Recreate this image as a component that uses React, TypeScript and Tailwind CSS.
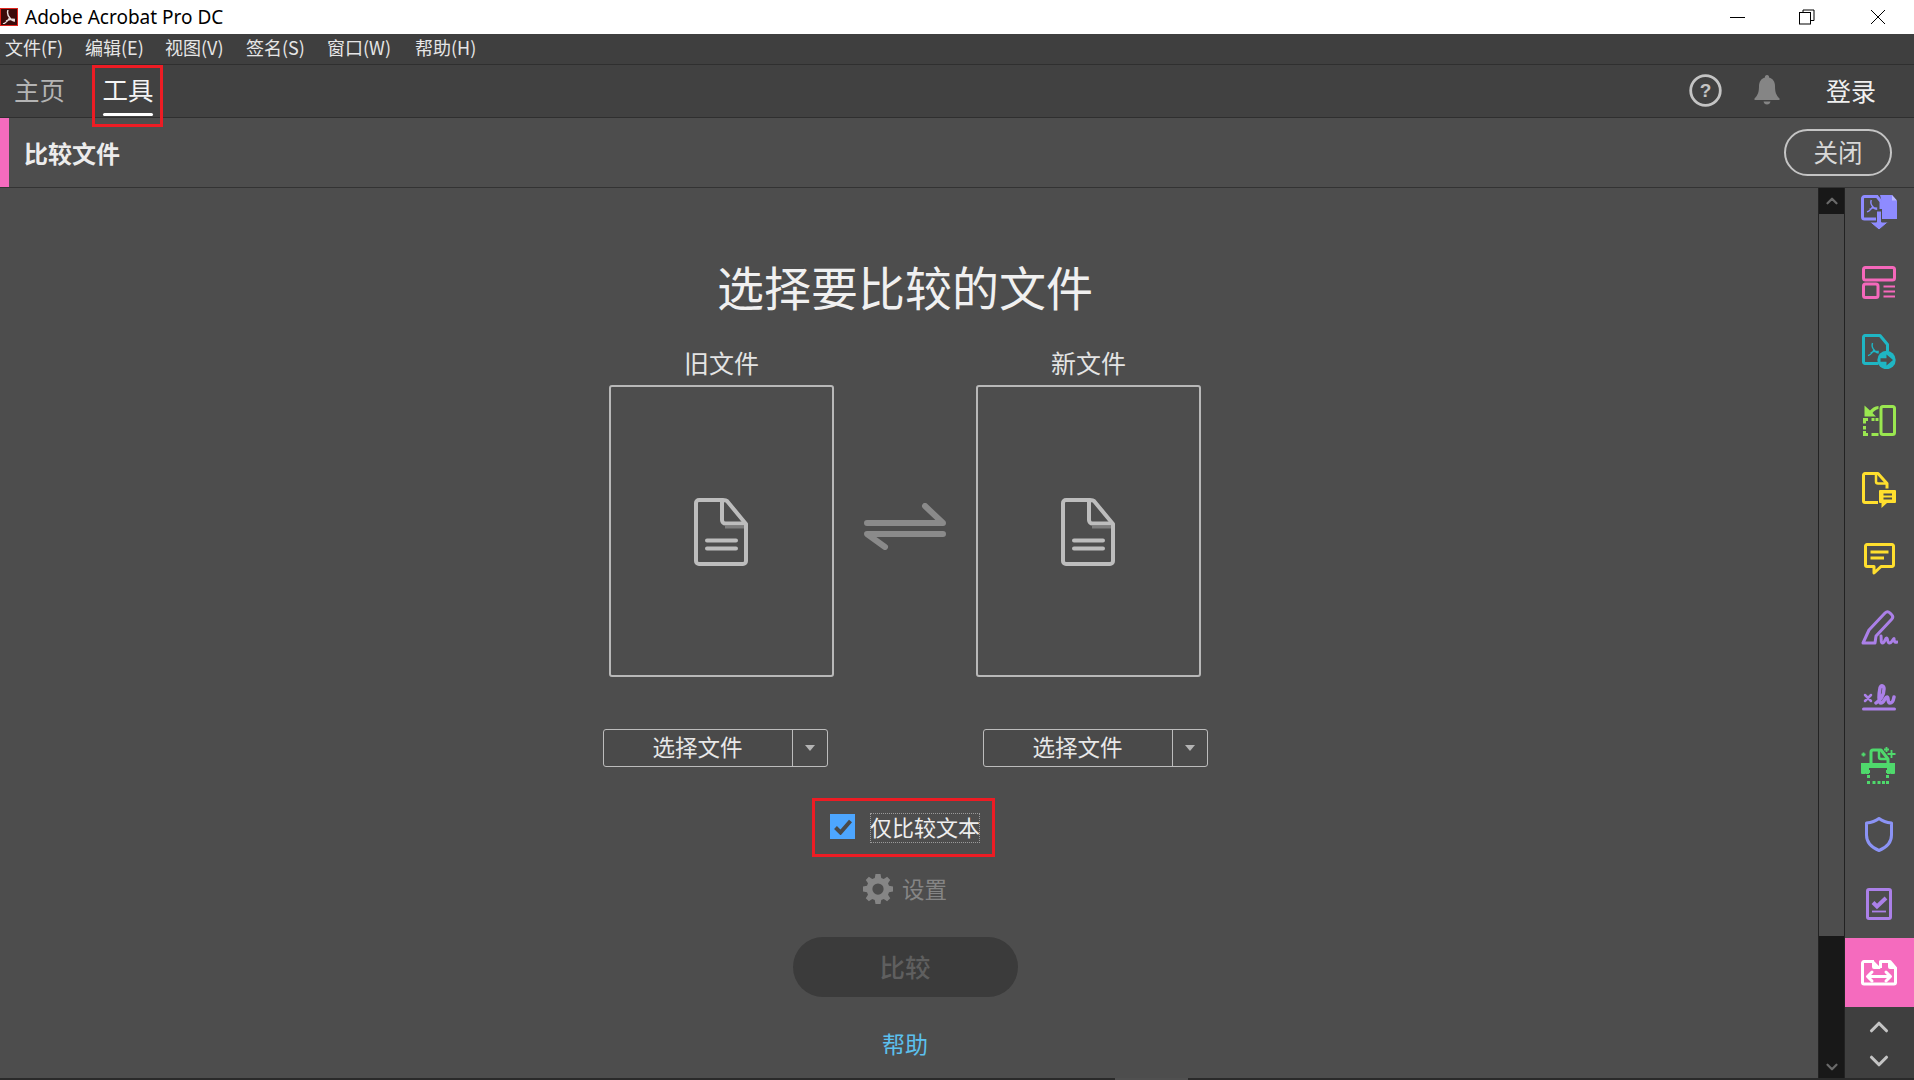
import { ReactNode } from "react";
import { ChevronDown, ChevronUp } from "lucide-react";

const menus = [
  { label: "文件(F)", width: "w-[80px]" },
  { label: "编辑(E)", width: "w-[80px]" },
  { label: "视图(V)", width: "w-[81px]" },
  { label: "签名(S)", width: "w-[81px]" },
  { label: "窗口(W)", width: "w-[88px]" },
  { label: "帮助(H)", width: "w-[80px]" },
];

function PdfMark({ x, y, s, color }: { x: number; y: number; s: number; color: string }) {
  return (
    <path
      transform={`translate(${x} ${y}) scale(${s})`}
      d="M5 0 C4 3 5 6 7 8 C8 10 10 11 12 11 M7 7 C5 11 3 13 0 14 M3 11 C6 9 9 9 12 9.500"
      fill="none"
      stroke={color}
      strokeWidth={1.4 / s}
    />
  );
}

function DocIcon() {
  return (
    <svg width="54" height="68" viewBox="0 0 54 68" fill="none" stroke="#bdbdbd" strokeWidth="4" strokeLinejoin="round">
      <path d="M29 2H5a3 3 0 0 0-3 3v58a3 3 0 0 0 3 3h44a3 3 0 0 0 3-3V26L33 3Q32 2 29 2Z" />
      <path d="M28 2v20a3.500 3.500 0 0 0 3.500 3.500H52" />
      <path d="M31 29H50" stroke="#7d7d7d" strokeWidth="3" />
      <path d="M13 42.500H42M13 50.500H42" strokeLinecap="round" />
    </svg>
  );
}

function SwapArrows() {
  return (
    <svg width="82" height="47" viewBox="0 0 82 47" fill="none" stroke="#8a8a8a" strokeWidth="6" strokeLinecap="round" strokeLinejoin="round">
      <path d="M3 20H79L61 3" />
      <path d="M79 31H3L21 44" />
    </svg>
  );
}

const railIcons: ReactNode[] = [
  <svg key="1" width="36" height="35" viewBox="0 0 36 35" fill="none">
    <path d="M17 1.500H3.500a2 2 0 0 0-2 2V22a2 2 0 0 0 2 2H15" stroke="#8e8bff" strokeWidth="3" />
    <path d="M16 1.500l4 5V14" stroke="#8e8bff" strokeWidth="3" />
    <path d="M19 0h12l5 6v18H21V8Z" fill="#8e8bff" />
    <path d="M31 0v5.500h5Z" fill="#b9b7ff" />
    <path d="M15.500 16h5v11h7L18 35 8.500 27h7Z" fill="#8e8bff" stroke="#4d4d4d" strokeWidth="1" />
    <PdfMark x={6} y={5} s={0.85} color="#8e8bff" />
  </svg>,
  <svg key="2" width="34" height="33" viewBox="0 0 34 33" fill="none" stroke="#f568bb" strokeWidth="3">
    <rect x="1.500" y="1.500" width="31" height="12.500" rx="2" />
    <rect x="1.500" y="18" width="14.500" height="13.500" rx="2" />
    <path d="M21.500 20.500H33M21.500 25.500H33M21.500 30.500H33" strokeWidth="1.800" />
  </svg>,
  <svg key="3" width="34" height="35" viewBox="0 0 34 35" fill="none">
    <path d="M16 29.500H3a1.500 1.500 0 0 1-1.500-1.500V3A1.500 1.500 0 0 1 3 1.500h15l7.500 9v7" stroke="#1fb6c4" strokeWidth="3" strokeLinejoin="round" />
    <PdfMark x={6} y={9} s={0.9} color="#1fb6c4" />
    <circle cx="24.500" cy="26" r="9.200" fill="#1fb6c4" />
    <path d="M18.500 24.200h6v-3.700L31 26l-6.500 5.500v-3.700h-6Z" fill="#4d4d4d" />
  </svg>,
  <svg key="4" width="33" height="31" viewBox="0 0 33 31" fill="none" stroke="#9ae750" strokeWidth="3">
    <rect x="18" y="1.500" width="13.500" height="28" rx="2" />
    <path d="M1.500 18.500V14.500H5M8.500 14.500H11.500M12.500 14.500H15.500M1.500 21V24.500M1.500 26V29.500H5M8.500 29.500H15.500" />
    <path d="M1.500 0.500V11.500H13L9.500 8C11 6 13 4.500 15.500 4V1C11.500 1.500 9 3.300 7 5.500Z" fill="#9ae750" stroke="none" />
  </svg>,
  <svg key="5" width="34" height="36" viewBox="0 0 34 36" fill="none">
    <path d="M16 30.500H3a1.500 1.500 0 0 1-1.500-1.500V3A1.500 1.500 0 0 1 3 1.500h13l9 10v5" stroke="#ffdf2e" strokeWidth="3" strokeLinejoin="round" />
    <path d="M14 1.500v8a2 2 0 0 0 2 2h9" stroke="#ffdf2e" strokeWidth="2.500" />
    <path d="M18 18h15a1 1 0 0 1 1 1v11a1 1 0 0 1-1 1H25l-5.500 5V31H18a1 1 0 0 1-1-1V19a1 1 0 0 1 1-1Z" fill="#ffdf2e" />
    <path d="M21.500 22.500H30M21.500 26.500H30" stroke="#4d4d4d" strokeWidth="1.800" />
  </svg>,
  <svg key="6" width="31" height="32" viewBox="0 0 31 32" fill="none" stroke="#ffdf2e" strokeWidth="3" strokeLinejoin="round">
    <path d="M3 1.500H28a1.500 1.500 0 0 1 1.500 1.500v19a1.500 1.500 0 0 1-1.500 1.500H17L10 30v-6.500H3A1.500 1.500 0 0 1 1.500 22V3A1.500 1.500 0 0 1 3 1.500Z" />
    <path d="M6.500 9H24.500M6.500 15H20" />
  </svg>,
  <svg key="7" width="37" height="35" viewBox="0 0 37 35" fill="none" stroke="#ab80e8" strokeWidth="3" strokeLinecap="round" strokeLinejoin="round">
    <path d="M2 33 8 20 24 3c1.500-1.500 3.500-1.500 5 0l1.500 1.500c1.500 1.500 1.500 3.500 0 5L15 26l-1 7Z" />
    <path d="M20 26c.5 3-.5 7 1.500 7 2.500 0 2.500-5 4-5s.5 5 3 5c2 0 3-3 4.500-4.500 0 2 .5 4.500 3 3.500" />
  </svg>,
  <svg key="8" width="34" height="28" viewBox="0 0 34 28" fill="none" stroke="#ab80e8" strokeWidth="3" strokeLinecap="round" strokeLinejoin="round">
    <path d="M3 12 9 18M9 12 3 18" strokeWidth="2.500" />
    <path d="M14 20c4-2 8-8 8-14 0-3-3-5-4-1-1 5-2 15 1 15 3 0 4-6 6-6s0 6 3 6 3.500-3 4-6" strokeWidth="3.500" />
    <path d="M1.500 26H32.500" />
  </svg>,
  <svg key="9" width="50" height="50" viewBox="0 0 50 50" fill="none" stroke="#4fd96c" strokeWidth="3" strokeLinejoin="round">
    <path d="M17 23V11a2 2 0 0 1 2-2h8l7 9v5" />
    <path d="M25 9v7a2 2 0 0 0 2 2h7" strokeWidth="2.500" />
    <path d="M7 22h34v5H36v6H12v-6H7Z" fill="#4fd96c" stroke="none" />
    <rect x="7" y="22" width="5" height="11" rx="1" fill="#4fd96c" stroke="none" />
    <rect x="36" y="22" width="5" height="11" rx="1" fill="#4fd96c" stroke="none" />
    <rect x="15" y="27" width="18" height="6" fill="#4d4d4d" stroke="none" />
    <rect x="13" y="29" width="3" height="3" fill="#4fd96c" stroke="none" />
    <rect x="32" y="29" width="3" height="3" fill="#4fd96c" stroke="none" />
    <rect x="13" y="34" width="3" height="3" fill="#4fd96c" stroke="none" />
    <rect x="32" y="34" width="3" height="3" fill="#4fd96c" stroke="none" />
    <rect x="13" y="40" width="3" height="3" fill="#4fd96c" stroke="none" />
    <rect x="18.500" y="40" width="3" height="3" fill="#4fd96c" stroke="none" />
    <rect x="23.500" y="40" width="3" height="3" fill="#4fd96c" stroke="none" />
    <rect x="28" y="40" width="3" height="3" fill="#4fd96c" stroke="none" />
    <rect x="32" y="40" width="3" height="3" fill="#4fd96c" stroke="none" />
    <path d="M37.500 9V17M33.500 13H41.500M32.500 6V11M30 8.500H35M9.500 11.500V15.500M7.500 13.500H11.500" strokeWidth="1.800" />
  </svg>,
  <svg key="10" width="28" height="35" viewBox="0 0 28 35" fill="none" stroke="#8b93f5" strokeWidth="3" strokeLinejoin="round">
    <path d="M14 1.500C10 4.500 6 5.500 1.500 6v12c0 7.500 5 12.500 12.500 15.500C21.500 30.500 26.500 25.500 26.500 18V6C22 5.500 18 4.500 14 1.500Z" />
  </svg>,
  <svg key="11" width="26" height="32" viewBox="0 0 26 32" fill="none" stroke="#ab80e8" strokeWidth="3">
    <rect x="1.500" y="1.500" width="23" height="29" rx="1.500" />
    <path d="M7 14.500 11 18.500 20 10" strokeWidth="4" />
    <path d="M6 23.500H20" strokeWidth="1.800" />
  </svg>,
];

function CompareIcon() {
  return (
    <svg width="36" height="26" viewBox="0 0 36 26" fill="none" stroke="#ffffff" strokeWidth="3" strokeLinejoin="round">
      <path d="M13 1.500H3A1.500 1.500 0 0 0 1.500 3v19.500A1.500 1.500 0 0 0 3 24h30a1.500 1.500 0 0 0 1.500-1.500V8L29 1.500H19.500V8" />
      <path d="M12 1.500 18.500 8H13a1 1 0 0 1-1-1Z" fill="#ffffff" strokeWidth="2" />
      <path d="M28 1.500 34.500 8H29a1 1 0 0 1-1-1Z" fill="#ffffff" strokeWidth="2" />
      <path d="M8 16.500H28" />
      <path d="M11 12 6.500 16.500 11 21M25 12 29.500 16.500 25 21" strokeLinecap="round" />
    </svg>
  );
}

function FilePicker({ title }: { title: string }) {
  return (
    <div className="flex flex-col items-center">
      <div className="text-[25px] leading-[28px] h-[30px] mb-[7px] text-[#e4e4e4]">{title}</div>
      <div className="w-[225px] h-[292px] flex items-center justify-center border-2 border-[#b8b8b8] rounded-[3px] pt-[2px] pr-[2px]">
        <DocIcon />
      </div>
    </div>
  );
}

function PickerButton() {
  return (
    <div className="w-[225px] h-[38px] flex rounded-[3px] border border-[#bcbcbc] bg-[#4a4a4a]">
      <div className="w-[189px] flex items-center justify-center pb-[2px] text-[22.500px] text-[#e8e8e8] border-r border-[#bcbcbc]">选择文件</div>
      <div className="flex-1 flex items-center justify-center pb-px">
        <div className="w-0 h-0 border-l-[5px] border-r-[5px] border-t-[6px] border-l-transparent border-r-transparent border-t-[#b4b4b4]" />
      </div>
    </div>
  );
}

function Gear() {
  return (
    <svg width="30" height="30" viewBox="0 0 24 24" fill="#858585">
      <path
        fillRule="evenodd"
        d="M10 0h4l.6 3.200 2 .8L19.300 2.200l2.500 2.500L20 7.400l.8 2L24 10v4l-3.200.6-.8 2 1.800 2.700-2.500 2.500L16.600 20l-2 .8L14 24h-4l-.6-3.200-2-.8-2.700 1.800-2.500-2.500L4 16.600l-.8-2L0 14v-4l3.200-.6.8-2L2.200 4.700l2.500-2.500L7.400 4l2-.8ZM12 7.500a4.500 4.500 0 1 0 0 9 4.500 4.500 0 0 0 0-9Z"
      />
    </svg>
  );
}

export default function App() {
  return (
    <div className="w-[1914px] h-[1080px] overflow-hidden flex flex-col bg-[#4d4d4d] font-['Noto_Sans_CJK_SC',sans-serif]">
      {/* title bar */}
      <div className="h-[34px] bg-white flex items-center shrink-0">
        <div className="w-[18px] h-[18px] bg-[#3b0a0a] border border-[#e0231c] flex items-center justify-center shrink-0">
          <svg width="14" height="14" viewBox="0 0 14 14">
            <PdfMark x={1} y={0} s={1} color="#e8dcdc" />
          </svg>
        </div>
        <span className="ml-[7px] text-[19px] text-black font-['Noto_Sans',sans-serif]">Adobe Acrobat Pro DC</span>
        <div className="ml-auto flex items-center">
          <div className="w-[15px] h-px bg-black mr-[54px]" />
          <svg width="16" height="16" viewBox="0 0 16 16" fill="none" stroke="#000" className="mr-[55px]">
            <rect x="0.500" y="3.500" width="11" height="11.500" />
            <path d="M4 3.500V1H15V11.500H11.500" />
          </svg>
          <svg width="16" height="16" viewBox="0 0 16 16" fill="none" stroke="#000" className="mr-[28px]">
            <path d="M1 1 15 15M15 1 1 15" />
          </svg>
        </div>
      </div>

      {/* menu */}
      <div className="h-[31px] bg-[#3f3f3f] border-b border-[#2f2f2f] flex items-center shrink-0 text-[18px] text-[#e6e6e6] pl-[5px] pb-[3px]">
        {menus.map((m) => (
          <span key={m.label} className={m.width}>{m.label}</span>
        ))}
      </div>

      {/* tabs */}
      <div className="h-[53px] bg-[#414141] border-b border-[#2f2f2f] flex shrink-0 relative">
        <span className="ml-[14px] mt-[6px] text-[25.500px] leading-[36px] text-[#b4b4b4]">主页</span>
        <div className="ml-[38px] w-[50px] h-full flex flex-col items-center relative">
          <span className="mt-[6px] text-[25.500px] leading-[36px] text-[#f4f4f4] whitespace-nowrap">工具</span>
          <div className="absolute left-0 bottom-[1px] w-[50px] h-[3px] rounded-full bg-white" />
          <div className="absolute left-[-11px] top-0 w-[71px] h-[62px] border-[3px] border-[#ed1c24] z-10" />
        </div>
        <div className="ml-auto flex items-center pr-[38px] pb-[2px]">
          <svg width="33" height="33" viewBox="0 0 33 33" className="mr-[32px]">
            <circle cx="16.500" cy="16.500" r="14.800" fill="none" stroke="#c4c4c4" strokeWidth="2.800" />
            <text x="16.500" y="23" textAnchor="middle" fontSize="19" fontWeight="700" fill="#c4c4c4" fontFamily="Liberation Sans">?</text>
          </svg>
          <svg width="26" height="30" viewBox="0 0 26 30" fill="#858585" className="mr-[46px]">
            <path d="M13 0a2 2 0 0 1 2 2.500c4 1 6 4.500 6 8.500 0 6 1 9 4.500 12.500V25H.5v-1.500C4 20 5 17 5 11c0-4 2-7.500 6-8.500A2 2 0 0 1 13 0Z" />
            <path d="M9.500 26.500h7C16 28.500 15 29.500 13 29.500s-3-1-3.500-3Z" />
          </svg>
          <span className="text-[25px] leading-[36px] text-[#f0f0f0]">登录</span>
        </div>
      </div>

      {/* tool header */}
      <div className="h-[70px] bg-[#4d4d4d] border-b border-[#333333] flex items-center shrink-0">
        <div className="w-[9px] h-full bg-[#f56bbe]" />
        <span className="ml-[15px] text-[24px] font-bold text-[#ececec]">比较文件</span>
        <div className="ml-auto mr-[22px] w-[108px] h-[47px] rounded-full border-2 border-[#c4c4c4] flex items-center justify-center text-[24.500px] text-[#d8d8d8]">关闭</div>
      </div>

      <div className="flex-1 flex min-h-0">
        {/* main */}
        <div className="w-[1818px] shrink-0">
          <div className="w-[1810px] flex flex-col items-center">
            <h1 className="mt-[64px] h-[68px] text-[47px] leading-[68px] text-[#f0f0f0]">选择要比较的文件</h1>
            <div className="mt-[28px] flex items-start">
              <FilePicker title="旧文件" />
              <div className="w-[142px] flex justify-center pt-[155px]">
                <SwapArrows />
              </div>
              <FilePicker title="新文件" />
            </div>
            <div className="mt-[52px] flex gap-[155px]">
              <PickerButton />
              <PickerButton />
            </div>
            <div className="mt-[31px] mr-[3px] w-[183px] h-[59px] border-[3px] border-[#ed1c24] flex items-center pl-[15px]">
              <div className="w-[25px] h-[25px] -mt-[2px] bg-[#4da6ff] flex items-center justify-center shrink-0">
                <svg width="18" height="16" viewBox="0 0 18 16" fill="none" stroke="#4a4a4a" strokeWidth="4">
                  <path d="M1.500 8.500 6.500 13.500 16.500 2" />
                </svg>
              </div>
              <div className="ml-[15px] w-[110px] h-[30px] border border-dotted border-[#9a9a9a] flex items-center justify-center pb-[2px] text-[22px] text-[#eeeeee] whitespace-nowrap">仅比较文本</div>
            </div>
            <div className="mt-[17px] flex items-center gap-[9px]">
              <Gear />
              <span className="text-[22.500px] leading-[28px] h-[30px] text-[#858585]">设置</span>
            </div>
            <div className="mt-[33px] w-[225px] h-[60px] rounded-full bg-[#3b3b3b] flex items-center justify-center pb-[2px] text-[25.500px] font-medium text-[#5f5f5f]">比较</div>
            <div className="mt-[29px] text-[23px] leading-[34px] text-[#5cc0ee]">帮助</div>
          </div>
        </div>

        {/* scroll track */}
        <div className="w-[27px] shrink-0 flex flex-col border-x border-[#222222]">
          <div className="h-[26px] bg-[#181818] flex items-center justify-center">
            <ChevronUp size={18} strokeWidth={3} color="#6a6a6a" />
          </div>
          <div className="h-[722px] bg-[#4d4d4d]" />
          <div className="flex-1 bg-[#181818] flex items-end justify-center pb-[2px]">
            <ChevronDown size={18} strokeWidth={3} color="#6a6a6a" />
          </div>
        </div>

        {/* right rail */}
        <div className="flex-1 flex flex-col min-w-0">
          {railIcons.map((icon, i) => (
            <div key={i} className={i === 0 ? "h-[60px] flex justify-center pt-[7px] pr-px" : "h-[69px] flex items-center justify-center pr-px"}>
              {icon}
            </div>
          ))}
          <div className="h-[69px] bg-[#f56bbe] flex items-center justify-center pr-px">
            <CompareIcon />
          </div>
          <div className="flex-1 bg-[#3f3f3f] flex flex-col items-center pt-[5px] gap-[4px] pr-px">
            <ChevronUp size={30} strokeWidth={2.500} color="#c4c4c4" />
            <ChevronDown size={30} strokeWidth={2.500} color="#c4c4c4" />
          </div>
        </div>
      </div>
      <div className="h-[2px] bg-[#2a2a2a] shrink-0 flex">
        <div className="ml-[1115px] w-[73px] bg-[#505050]" />
      </div>
    </div>
  );
}
